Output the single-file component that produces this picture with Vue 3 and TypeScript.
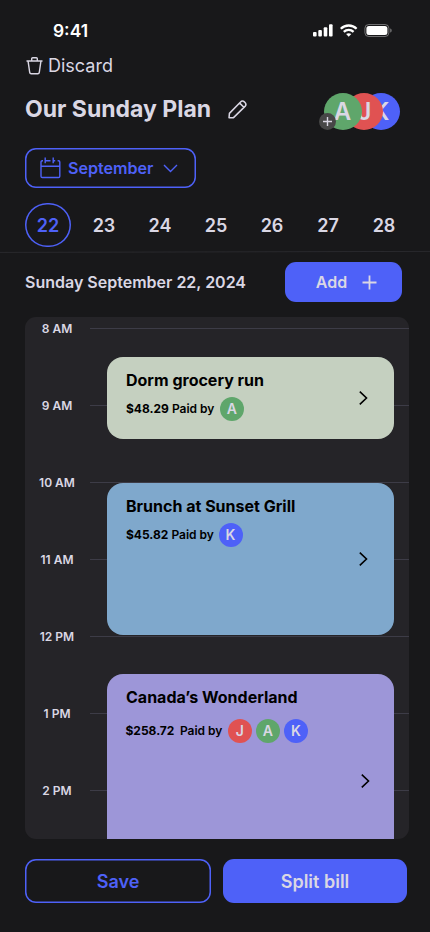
<script setup lang="ts">
interface Person { initial: string; tone: string }
interface PlanEvent { title: string; amount: string; kind: string; paidBy: Person[] }

const anna: Person = { initial: 'A', tone: 'green' }
const jay: Person = { initial: 'J', tone: 'red' }
const kim: Person = { initial: 'K', tone: 'blue' }

const members: Person[] = [anna, jay, kim]
const days: number[] = [22, 23, 24, 25, 26, 27, 28]
const hours: string[] = ['8 AM', '9 AM', '10 AM', '11 AM', '12 PM', '1 PM', '2 PM']
const events: PlanEvent[] = [
  { title: 'Dorm grocery run', amount: '$48.29', kind: 'grocery', paidBy: [anna] },
  { title: 'Brunch at Sunset Grill', amount: '$45.82', kind: 'brunch', paidBy: [kim] },
  { title: 'Canada’s Wonderland', amount: '$258.72', kind: 'park', paidBy: [jay, anna, kim] },
]
</script>

<template>
  <main class="screen">
    <div class="status">
      <span class="clock">9:41</span>
      <svg class="status-icons" width="80" height="16" viewBox="0 0 80 16">
        <g fill="#fff">
          <rect x="1" y="9" width="3.6" height="4.6" rx="1" />
          <rect x="6.3" y="7" width="3.6" height="6.6" rx="1" />
          <rect x="11.7" y="4.2" width="3.6" height="9.4" rx="1" />
          <rect x="17" y="1.3" width="3.6" height="12.3" rx="1" />
        </g>
        <g fill="none" stroke="#fff" stroke-width="2.3">
          <path d="M28.8 5.7C33.2 1.4 40.2 1.4 44.6 5.7" />
          <path d="M31.8 8.9C34.6 6.2 38.8 6.2 41.6 8.9" />
        </g>
        <path d="M34.1 11.1C35.5 9.8 37.9 9.8 39.3 11.1L36.7 13.8Z" fill="#fff" />
        <rect x="52.9" y="1.5" width="24" height="12" rx="3.8" fill="none" stroke="#fff" stroke-opacity=".38" />
        <rect x="54.4" y="3" width="21" height="9" rx="2.5" fill="#fff" />
        <path d="M78.2 5.5v4c1-.3 1.5-1.1 1.5-2s-.5-1.7-1.5-2Z" fill="#fff" fill-opacity=".4" />
      </svg>
    </div>

    <button class="discard">
      <svg width="17" height="18" viewBox="0 0 17 18" fill="none" stroke="currentColor" stroke-width="1.4" stroke-linejoin="round">
        <path d="M.5 4h16M5.7 4V1.7c0-.6.4-1 1-1h3.6c.6 0 1 .4 1 1V4M2.1 4.3 3.7 15.4c.1.9.7 1.4 1.5 1.4h6.6c.8 0 1.4-.5 1.5-1.4L14.9 4.3" />
      </svg>
      <span>Discard</span>
    </button>

    <header class="heading">
      <h1>Our Sunday Plan</h1>
      <svg class="pencil" width="19" height="19" viewBox="0 0 20 20" fill="none" stroke="currentColor" stroke-width="1.6" stroke-linejoin="round">
        <path d="M1.1 18.7 1.5 14.1 13.2 2.2C14.5.8 16 .8 17.2 2l.7.7c1.2 1.2 1.2 2.7 0 4L6.1 18.3Q5.7 18.7 5.1 18.7ZM12.3 3.3l4.4 4.4" />
      </svg>
      <div class="members">
        <span v-for="(p, i) in members" :key="p.initial" class="member" :class="[p.tone, 'order-' + i]"><b>{{ p.initial }}</b></span>
        <button class="invite" aria-label="Add member">
          <svg width="9" height="9" viewBox="0 0 9 9" stroke="#d9d6e3" stroke-width="1.4"><path d="M4.5 0v9M0 4.5h9" /></svg>
        </button>
      </div>
    </header>

    <button class="month">
      <svg width="21" height="22" viewBox="0 0 21 22" fill="none" stroke="currentColor" stroke-width="1.4">
        <path d="M3 3.7H2.3C1.5 3.7 1 4.2 1 5v14.2c0 .8.5 1.3 1.3 1.3h16.2c.8 0 1.3-.5 1.3-1.3V5c0-.8-.5-1.3-1.3-1.3h-.9M5.2.5v5.7M13.2.5v5.7M5.3 3.7h5.2M13.2 3.7h2M1 9.2h18.8" />
      </svg>
      <span>September</span>
      <svg class="chevron" width="15" height="9" viewBox="0 0 15 9" fill="none" stroke="currentColor" stroke-width="1.4"><path d="m1 1 6.5 6.6L14 1" /></svg>
    </button>

    <nav class="days">
      <button v-for="d in days" :key="d" :class="{ active: d === 22 }">{{ d }}</button>
    </nav>

    <svg class="divider" width="430" height="3" viewBox="0 0 430 3"><path d="M0 2.4 430 1.4" stroke="#29292d" /></svg>

    <section class="dayline">
      <h2>Sunday September 22, 2024</h2>
      <button class="add">
        <span>Add</span>
        <svg width="15" height="15" viewBox="0 0 15 15" stroke="currentColor" stroke-width="1.8"><path d="M7.5.5v14M.5 7.5h14" /></svg>
      </button>
    </section>

    <section class="timeline">
      <ol class="hours">
        <li v-for="h in hours" :key="h"><span>{{ h }}</span><i></i></li>
      </ol>
      <div class="events">
        <article v-for="e in events" :key="e.title" :class="e.kind">
          <div class="info">
            <h3>{{ e.title }}</h3>
            <div class="paid">
              <span class="amount">{{ e.amount }}</span>
              <span class="by">Paid by</span>
              <span v-for="p in e.paidBy" :key="p.initial" class="payer" :class="p.tone">{{ p.initial }}</span>
            </div>
          </div>
          <svg class="go" width="9" height="14" viewBox="0 0 9 14" fill="none" stroke="#000" stroke-width="1.6"><path d="m.8.6 6.7 6.4L.8 13.4" /></svg>
        </article>
      </div>
    </section>

    <footer class="actions">
      <button class="save">Save</button>
      <button class="split">Split bill</button>
    </footer>
  </main>
</template>

<style>
body { background: #18181a; }
</style>

<style scoped>
* { box-sizing: border-box; }
.screen {
  width: 430px; height: 932px; overflow: hidden;
  display: flex; flex-direction: column;
  background: #18181a; color: #dad7e4;
  font-family: Inter, "Liberation Sans", sans-serif;
}
button { font: inherit; color: inherit; background: none; border: 0; padding: 0; margin: 0; }
h1, h2, h3, ol { margin: 0; padding: 0; }
svg { display: block; flex: none; }
.status { display: flex; justify-content: space-between; align-items: center; height: 54px; padding: 8px 38px 0 53px; flex: none; }
.clock { color: #fff; font-size: 17.4px; font-weight: 600; line-height: 20px; }
.discard { display: flex; align-items: center; gap: 5px; height: 24px; margin-left: 26px; align-self: flex-start; font-size: 18px; line-height: 24px; }
.heading { display: flex; align-items: center; height: 37px; margin-top: 15px; padding: 0 30px 0 25px; }
h1 { font-size: 23px; font-weight: 700; line-height: 32px; width: 203px; white-space: nowrap; padding-bottom: 6px; }
.pencil { margin-bottom: 5px; }
.members { display: flex; margin-left: auto; position: relative; }
.member { width: 38px; height: 37px; border-radius: 50%; display: flex; align-items: center; justify-content: center; font-size: 24px; }
.member b { font-weight: 600; }
.order-0 { z-index: 3; padding-right: 1px; }
.order-1 { z-index: 2; margin-left: -17px; padding-left: 1px; }
.order-2 { z-index: 1; margin-left: -21px; }
.green { background: #5fa66b; }
.red { background: #e05252; }
.blue { background: #4e61f8; }
.invite { position: absolute; z-index: 4; left: -5px; top: 20px; width: 17px; height: 17px; border-radius: 50%; background: #474747; display: flex; align-items: center; justify-content: center; }
.month { display: flex; align-items: center; width: 171px; height: 40px; margin: 18px 0 0 25px; padding-left: 15px; flex: none; box-shadow: inset 0 0 0 1.5px #4e61f8; border-radius: 11px; color: #4e61f8; font-size: 16.1px; font-weight: 600; }
.month span { width: 95px; margin-left: 7px; text-align: left; }
.month svg:first-child { margin-bottom: 1px; }
.days { display: flex; gap: 10px; margin: 15px 0 0 25px; flex: none; }
.days button { width: 46px; height: 44px; font-size: 18px; font-weight: 600; }
.days .active { box-shadow: inset 0 0 0 1.5px #4e61f8; border-radius: 22px; color: #4e61f8; }
.divider { margin-top: 3px; }
.dayline { display: flex; align-items: center; justify-content: space-between; height: 40px; margin-top: 9px; padding: 0 28px 0 25px; }
h2 { font-size: 16px; font-weight: 600; }
.add { width: 117px; height: 40px; border-radius: 11px; background: #4e61f8; display: flex; align-items: center; justify-content: center; gap: 15px; padding-left: 6px; font-size: 16px; font-weight: 600; }
.timeline { display: grid; width: 384px; height: 522px; margin: 15px 0 0 25px; flex: none; border-radius: 11px; background: #252428; overflow: hidden; }
.hours, .events { grid-area: 1 / 1; min-width: 0; min-height: 0; }
.hours { list-style: none; }
.hours li { display: flex; align-items: center; height: 22px; margin-bottom: 55px; }
.hours span { width: 65px; padding-right: 1px; text-align: center; font-size: 12px; font-weight: 600; white-space: nowrap; }
.hours i { flex: 1; height: 1px; background: #3d3c47; margin-top: 1px; }
.events { padding: 40px 15px 0 82px; display: flex; flex-direction: column; position: relative; }
.events article { display: flex; justify-content: space-between; border-radius: 16px; color: #000; flex: none; padding: 13px 26.5px 0 19px; }
.grocery { height: 82px; background: #c5d0c0; }
.events .brunch { height: 152.5px; margin-top: 43.6px; background: #7fa8cc; padding-top: 13.4px; }
.park { height: 240px; margin-top: 38.9px; background: #9d96d8; }
h3 { font-size: 16px; font-weight: 700; line-height: 20px; }
.paid { display: flex; align-items: center; height: 24px; margin-top: 7px; font-size: 12px; font-weight: 600; }
.amount, .by { padding-bottom: 1px; }
.amount { font-weight: 700; margin-right: 3px; }
.by { margin-right: 6px; }
.brunch .by { margin-right: 5px; }
.payer { width: 24px; height: 24px; border-radius: 50%; display: flex; align-items: center; justify-content: center; color: #dad7e4; font-size: 14px; margin-right: 4px; padding: 0 1px 1px 0; }
.park .paid { margin-top: 12px; margin-left: -.5px; }
.park .amount { margin-right: 5.5px; }
.grocery .go { margin-top: 21px; }
.brunch .go { margin-top: 56px; }
.park .go { margin-top: 87.5px; margin-right: -2px; }
.actions { display: flex; gap: 12px; margin: 20px 23px 0 25px; }
.actions button { height: 44px; border-radius: 11px; font-size: 18px; font-weight: 600; }
.actions .save { width: 186px; color: #4e61f8; box-shadow: inset 0 0 0 1.5px #4e61f8; }
.actions .split { width: 184px; background: #4e61f8; }
</style>
